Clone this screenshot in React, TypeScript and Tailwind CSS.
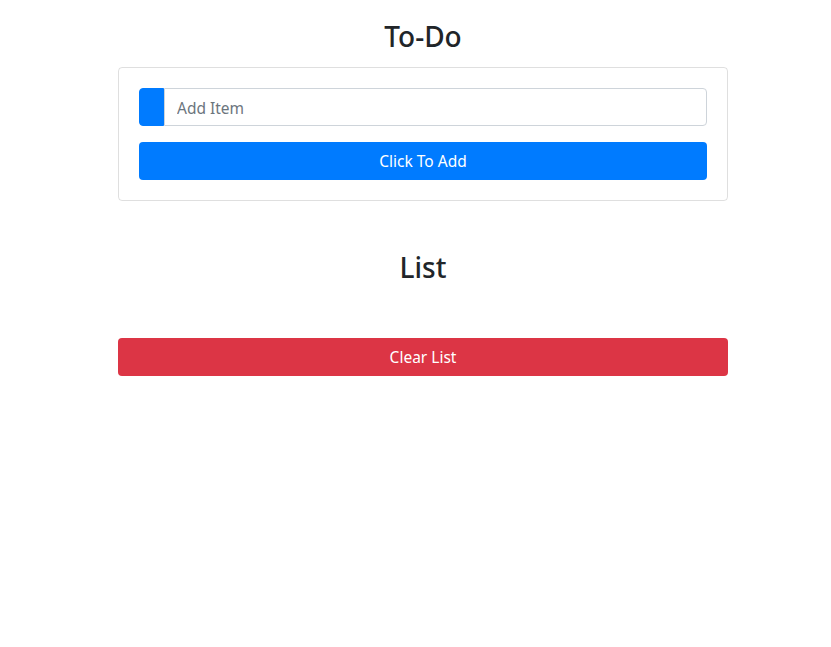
import { useState } from 'react'

export default function App() {
  const [items, setItems] = useState<string[]>([])
  const [text, setText] = useState('')

  const add = () => {
    if (!text.trim()) return
    setItems([...items, text.trim()])
    setText('')
  }

  return (
    <div
      className="min-h-screen bg-white text-[#212529]"
      style={{ fontFamily: '"Noto Sans", "Open Sans", sans-serif' }}
    >
      <div className="ml-[118px] w-[610px] pt-[17px]">
        <h2 className="mb-3 text-center text-[28px] leading-[38px] font-medium">To-Do</h2>
        <div className="rounded border border-black/[0.125] p-5">
          <div className="flex h-[38px]">
            <span className="w-[25px] shrink-0 rounded-l border border-[#007bff] bg-[#007bff]" />
            <input
              value={text}
              onChange={e => setText(e.target.value)}
              placeholder="Add Item"
              className="min-w-0 flex-1 rounded-r border border-[#ced4da] px-3 pt-[3px] text-[15.5px] text-[#495057] outline-none placeholder:text-[#6c757d]"
            />
          </div>
          <button
            onClick={add}
            className="mt-4 block h-[38px] w-full rounded bg-[#007bff] pt-[2px] text-[15.5px] text-white"
          >
            Click To Add
          </button>
        </div>
        <h2 className="mt-[47px] mb-2 text-center text-[28px] leading-[38px] font-medium">List</h2>
        <ul className="mb-[52px]">
          {items.map((it, i) => (
            <li key={i} className="border-b border-black/[0.125] px-5 py-3">{it}</li>
          ))}
        </ul>
        <button
          onClick={() => setItems([])}
          className="block h-[38px] w-full rounded bg-[#dc3545] pt-[2px] text-[15.5px] text-white"
        >
          Clear List
        </button>
      </div>
    </div>
  )
}
